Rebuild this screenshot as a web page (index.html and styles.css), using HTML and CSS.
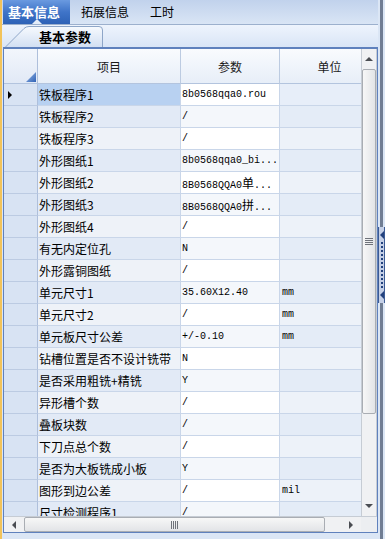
FILE: index.html
```html
<!DOCTYPE html>
<html lang="zh-CN">
<head>
    <meta charset="UTF-8">
    <title>基本信息</title>
    <link rel="stylesheet" href="styles.css">
</head>
<body>
    <div class="edge"></div>
    <div class="main">
        <div class="tabbar">
            <div class="tab active">基本信息</div>
            <div class="tab">拓展信息</div>
            <div class="tab">工时</div>
        </div>
        <div class="subbar">
            <div class="subtab">
                <svg class="subtab-shape" width="99" height="21" viewBox="0 0 99 21">
                    <defs>
                        <linearGradient id="tabfill" x1="0" y1="0" x2="0" y2="1">
                            <stop offset="0" stop-color="#f7fafe"/>
                            <stop offset="1" stop-color="#d2dff2"/>
                        </linearGradient>
                    </defs>
                    <path d="M0.5,21 L19,2.5 Q21,0.5 24,0.5 L94,0.5 Q97.5,0.5 97.5,4 L97.5,21" fill="url(#tabfill)" stroke="#8ea6c8"/>
                </svg>
                <span class="subtab-text">基本参数</span>
            </div>
        </div>
        <div class="grid">
            <div class="viewport">
                <div class="row head">
                    <div class="cell rh corner-hd"><span class="tri"></span></div>
                    <div class="cell hd">项目</div>
                    <div class="cell hd">参数</div>
                    <div class="cell hd">单位</div>
                </div>
                <div class="row sel">
                    <div class="cell rh"><span class="cur"></span></div>
                    <div class="cell lbl">铁板程序1</div>
                    <div class="cell val">8b0568qqa0.rou</div>
                    <div class="cell unit"></div>
                </div>
                <div class="row alt">
                    <div class="cell rh"></div>
                    <div class="cell lbl">铁板程序2</div>
                    <div class="cell val">/</div>
                    <div class="cell unit"></div>
                </div>
                <div class="row">
                    <div class="cell rh"></div>
                    <div class="cell lbl">铁板程序3</div>
                    <div class="cell val">/</div>
                    <div class="cell unit"></div>
                </div>
                <div class="row alt">
                    <div class="cell rh"></div>
                    <div class="cell lbl">外形图纸1</div>
                    <div class="cell val">8b0568qqa0_bi...</div>
                    <div class="cell unit"></div>
                </div>
                <div class="row">
                    <div class="cell rh"></div>
                    <div class="cell lbl">外形图纸2</div>
                    <div class="cell val">8B0568QQA0<span class="cjk">单</span>...</div>
                    <div class="cell unit"></div>
                </div>
                <div class="row alt">
                    <div class="cell rh"></div>
                    <div class="cell lbl">外形图纸3</div>
                    <div class="cell val">8B0568QQA0<span class="cjk">拼</span>...</div>
                    <div class="cell unit"></div>
                </div>
                <div class="row">
                    <div class="cell rh"></div>
                    <div class="cell lbl">外形图纸4</div>
                    <div class="cell val">/</div>
                    <div class="cell unit"></div>
                </div>
                <div class="row alt">
                    <div class="cell rh"></div>
                    <div class="cell lbl">有无内定位孔</div>
                    <div class="cell val">N</div>
                    <div class="cell unit"></div>
                </div>
                <div class="row">
                    <div class="cell rh"></div>
                    <div class="cell lbl">外形露铜图纸</div>
                    <div class="cell val">/</div>
                    <div class="cell unit"></div>
                </div>
                <div class="row alt">
                    <div class="cell rh"></div>
                    <div class="cell lbl">单元尺寸1</div>
                    <div class="cell val">35.60X12.40</div>
                    <div class="cell unit">mm</div>
                </div>
                <div class="row">
                    <div class="cell rh"></div>
                    <div class="cell lbl">单元尺寸2</div>
                    <div class="cell val">/</div>
                    <div class="cell unit">mm</div>
                </div>
                <div class="row alt">
                    <div class="cell rh"></div>
                    <div class="cell lbl">单元板尺寸公差</div>
                    <div class="cell val">+/-0.10</div>
                    <div class="cell unit">mm</div>
                </div>
                <div class="row">
                    <div class="cell rh"></div>
                    <div class="cell lbl">钻槽位置是否不设计铣带</div>
                    <div class="cell val">N</div>
                    <div class="cell unit"></div>
                </div>
                <div class="row alt">
                    <div class="cell rh"></div>
                    <div class="cell lbl">是否采用粗铣+精铣</div>
                    <div class="cell val">Y</div>
                    <div class="cell unit"></div>
                </div>
                <div class="row">
                    <div class="cell rh"></div>
                    <div class="cell lbl">异形槽个数</div>
                    <div class="cell val">/</div>
                    <div class="cell unit"></div>
                </div>
                <div class="row alt">
                    <div class="cell rh"></div>
                    <div class="cell lbl">叠板块数</div>
                    <div class="cell val">/</div>
                    <div class="cell unit"></div>
                </div>
                <div class="row">
                    <div class="cell rh"></div>
                    <div class="cell lbl">下刀点总个数</div>
                    <div class="cell val">/</div>
                    <div class="cell unit"></div>
                </div>
                <div class="row alt">
                    <div class="cell rh"></div>
                    <div class="cell lbl">是否为大板铣成小板</div>
                    <div class="cell val">Y</div>
                    <div class="cell unit"></div>
                </div>
                <div class="row">
                    <div class="cell rh"></div>
                    <div class="cell lbl">图形到边公差</div>
                    <div class="cell val">/</div>
                    <div class="cell unit">mil</div>
                </div>
                <div class="row alt">
                    <div class="cell rh"></div>
                    <div class="cell lbl">尺寸检测程序1</div>
                    <div class="cell val">/</div>
                    <div class="cell unit"></div>
                </div>
            </div>

            <div class="vscroll">
                <div class="sbtn"><span class="arr up"></span></div>
                <div class="vtrack">
                    <div class="vthumb"><span class="grip-h"></span></div>
                </div>
                <div class="sbtn"><span class="arr down"></span></div>
            </div>

            <div class="hscroll">
                <div class="sbtn"><span class="arr left"></span></div>
                <div class="htrack">
                    <div class="hthumb"><span class="grip-v"></span></div>
                </div>
                <div class="sbtn"><span class="arr right"></span></div>
            </div>

            <div class="sizebox"></div>
        </div>
    </div>
    <div class="splitter">
        <div class="split-handle">
            <span class="sarr"></span>
            <span class="dots"></span>
            <span class="sarr"></span>
        </div>
    </div>
</body>
</html>
```

FILE: styles.css
```css
* {
    margin: 0;
    padding: 0;
    box-sizing: border-box;
}

body {
    width: 385px;
    height: 539px;
    overflow: hidden;
    display: flex;
    background-color: #dbe6f5;
    font-family: "Noto Sans CJK SC", "Noto Sans", sans-serif;
    font-size: 12px;
    color: #000;
}

.edge {
    width: 2px;
    background-color: #f2c35a;
}

.main {
    width: 376px;
    display: flex;
    flex-direction: column;
}

/* top tabs */
.tabbar {
    height: 25px;
    display: flex;
    padding-left: 1px;
    background-image: linear-gradient(to bottom, #c1d2ec, #d9e5f5);
    border-bottom: 1px solid #9cb0cd;
}

.tab {
    position: relative;
    display: flex;
    align-items: center;
    padding: 0 10px 0 9px;
    line-height: 24px;
    font-size: 12px;
}

.tab + .tab {
    margin-left: 2px;
}

.tab.active {
    width: 67px;
    padding: 0 0 0 5px;
    font-size: 13px;
    font-weight: bold;
    color: #fff;
    background-image: linear-gradient(to bottom, #6a9ae0, #3f74c8 50%, #2e62b6);
}

.tab.active::after {
    content: "";
    position: absolute;
    left: 29px;
    bottom: 0;
    border-left: 5px solid transparent;
    border-right: 5px solid transparent;
    border-bottom: 5px solid #e4edf9;
}

/* sub tab */
.subbar {
    height: 22px;
    display: flex;
    align-items: flex-end;
    padding-left: 3px;
    background-image: linear-gradient(to bottom, #eef4fd, #d9e5f6);
}

.subtab {
    position: relative;
    width: 99px;
    height: 21px;
    display: flex;
    align-items: center;
    padding-left: 34px;
}

.subtab-shape {
    position: absolute;
    left: 0;
    top: 0;
}

.subtab-text {
    position: relative;
    font-size: 13px;
    font-weight: bold;
    line-height: 20px;
}

/* grid */
.grid {
    margin-left: 1px;
    width: 375px;
    height: 486px;
    display: grid;
    grid-template-columns: 357px 16px;
    grid-template-rows: 467px 16px;
    border: 1px solid #5f81bd;
    border-top-width: 2px;
    background-color: #fff;
}

.viewport {
    overflow: hidden;
}

.row {
    width: 376px;
    height: 22px;
    display: grid;
    grid-template-columns: 34px 143px 99px 100px;
}

.row.head {
    height: 35px;
}

.cell {
    border-right: 1px solid #c9d6e9;
    border-bottom: 1px solid #c9d6e9;
    line-height: 21px;
    white-space: nowrap;
    overflow: hidden;
}

.hd {
    display: flex;
    align-items: center;
    justify-content: center;
    background-image: linear-gradient(to bottom, #f9fbfe, #e7eef8);
    border-right-color: #bccbe1;
    border-bottom-color: #b3c4de;
    color: #1a1a1a;
}

.rh {
    display: flex;
    align-items: center;
    padding-left: 4px;
    background-color: #d8e3f3;
    border-right-color: #aebfdb;
    border-bottom-color: #bccbe2;
}

.corner-hd {
    align-items: flex-end;
    justify-content: flex-end;
    padding: 0 1px 1px 0;
    background-image: linear-gradient(to bottom, #f2f6fc, #e1e9f6);
    border-bottom-color: #b3c4de;
}

.tri {
    width: 10px;
    height: 10px;
    background-image: linear-gradient(135deg, #9bbbe8, #3062b6);
    clip-path: polygon(100% 0, 100% 100%, 0 100%);
}

.cur {
    width: 0;
    height: 0;
    border-left: 4px solid #000;
    border-top: 4px solid transparent;
    border-bottom: 4px solid transparent;
}

.lbl {
    padding-left: 1px;
    background-color: #eef2f8;
}

.val {
    padding-left: 1px;
    font-family: "Liberation Mono", "Noto Sans CJK SC", monospace;
    font-size: 10px;
    background-color: #fff;
}

.cjk {
    font-family: "Noto Sans CJK SC", sans-serif;
    font-size: 12px;
}

.unit {
    padding-left: 2px;
    font-family: "Liberation Mono", monospace;
    font-size: 10px;
    background-color: #edf2f9;
}

.row.alt .lbl {
    background-color: #e2eaf6;
}

.row.alt .val {
    background-color: #f4f7fb;
}

.row.alt .unit {
    background-color: #e4ecf7;
}

.row.sel .lbl {
    background-color: #b8d1f1;
}

.row.sel .unit {
    background-color: #e7eef9;
}

/* scrollbars */
.vscroll {
    display: flex;
    flex-direction: column;
    background-color: #f0f1f3;
    border-left: 1px solid #c6ccd4;
    border-right: 1px solid #c6ccd4;
}

.hscroll {
    display: flex;
    background-color: #f0f1f3;
    border-top: 1px solid #c6ccd4;
}

.sbtn {
    display: flex;
    align-items: center;
    justify-content: center;
    flex: 0 0 20px;
}

.vtrack {
    flex: 1;
    display: flex;
    flex-direction: column;
}

.vthumb {
    height: 345px;
    display: flex;
    align-items: center;
    justify-content: center;
    background-image: linear-gradient(to right, #f7f7f7, #e2e4e7);
    border: 1px solid #a9adb3;
    border-radius: 2px;
}

.htrack {
    flex: 1;
    display: flex;
}

.hthumb {
    width: 301px;
    display: flex;
    align-items: center;
    justify-content: center;
    background-image: linear-gradient(to bottom, #f7f7f7, #e2e4e7);
    border: 1px solid #a9adb3;
    border-radius: 2px;
}

.grip-h {
    width: 8px;
    height: 7px;
    background-image: repeating-linear-gradient(to bottom, #6f737a 0 1px, transparent 1px 2px);
}

.grip-v {
    width: 7px;
    height: 8px;
    background-image: repeating-linear-gradient(to right, #6f737a 0 1px, transparent 1px 2px);
}

.arr {
    width: 0;
    height: 0;
}

.arr.up {
    border-left: 4px solid transparent;
    border-right: 4px solid transparent;
    border-bottom: 4px solid #4a4d52;
}

.arr.down {
    border-left: 4px solid transparent;
    border-right: 4px solid transparent;
    border-top: 4px solid #4a4d52;
}

.arr.left {
    border-top: 4px solid transparent;
    border-bottom: 4px solid transparent;
    border-right: 4px solid #4a4d52;
}

.arr.right {
    border-top: 4px solid transparent;
    border-bottom: 4px solid transparent;
    border-left: 4px solid #4a4d52;
}

.sizebox {
    background-color: #eceef1;
    border-top: 1px solid #c6ccd4;
}

/* right splitter */
.splitter {
    width: 7px;
    display: flex;
    flex-direction: column;
    justify-content: center;
    background-image: linear-gradient(to right, #dbe6f5 0 2px, #707d93 2px 5px, #dbe6f5 5px);
}

.split-handle {
    height: 76px;
    margin-top: -10px;
    display: flex;
    flex-direction: column;
    align-items: center;
    justify-content: space-between;
    padding: 4px 0;
    background-color: #c4cfe6;
    border-left: 1px solid #3c5b94;
    border-right: 1px solid #3c5b94;
}

.sarr {
    width: 0;
    height: 0;
    border-top: 4px solid transparent;
    border-bottom: 4px solid transparent;
    border-right: 4px solid #23427e;
}

.dots {
    flex: 1;
    margin: 3px 0;
    width: 2px;
    background-image: repeating-linear-gradient(to bottom, #23427e 0 2px, transparent 2px 4px);
}
```
